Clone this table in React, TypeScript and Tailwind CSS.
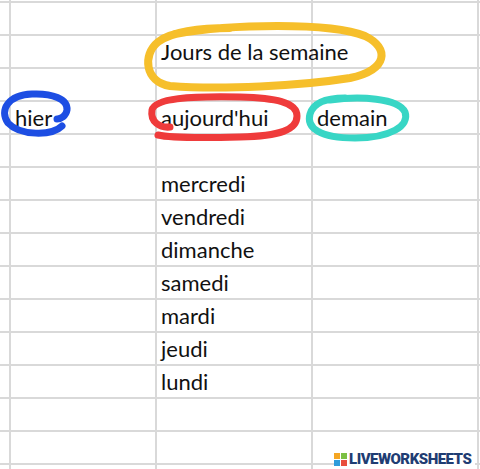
import React from "react";

const rows: [string, string, string, string][] = [
  ["", "", "", ""],
  ["", "", "Jours de la semaine", ""],
  ["", "", "", ""],
  ["", "hier", "aujourd'hui", "demain"],
  ["", "", "", ""],
  ["", "", "mercredi", ""],
  ["", "", "vendredi", ""],
  ["", "", "dimanche", ""],
  ["", "", "samedi", ""],
  ["", "", "mardi", ""],
  ["", "", "jeudi", ""],
  ["", "", "lundi", ""],
  ["", "", "", ""],
  ["", "", "", ""],
];

const Cell = ({ w, text }: { w: string; text: string }) => (
  <div className={`${w} h-full shrink-0 border-r-2 border-[#d9d9d9] flex items-end pl-[4px] pb-[2px] overflow-visible`}>
    {text ? (
      <span className="whitespace-nowrap text-[22px] leading-[26px] text-[#111111]">{text}</span>
    ) : null}
  </div>
);

export default function App() {
  return (
    <div
      className="relative w-[480px] h-[469px] bg-white overflow-hidden"
      style={{ fontFamily: "Lato, 'Open Sans', sans-serif" }}
    >
      <div className="flex flex-col">
        <div className="h-[3px] border-b-2 border-[#d9d9d9] flex">
          <div className="w-[11px] h-full border-r-2 border-[#d9d9d9]" />
          <div className="w-[146px] h-full border-r-2 border-[#d9d9d9]" />
          <div className="w-[156px] h-full border-r-2 border-[#d9d9d9]" />
          <div className="w-[166px] h-full border-r-2 border-[#d9d9d9]" />
        </div>
        {rows.map((r, i) => (
          <div key={i} className="h-[33px] border-b-2 border-[#d9d9d9] flex">
            <Cell w="w-[11px]" text={r[0]} />
            <Cell w="w-[146px]" text={r[1]} />
            <Cell w="w-[156px]" text={r[2]} />
            <Cell w="w-[166px]" text={r[3]} />
          </div>
        ))}
        <div className="h-[10px] flex">
          <div className="w-[11px] h-full border-r-2 border-[#d9d9d9]" />
          <div className="w-[146px] h-full border-r-2 border-[#d9d9d9]" />
          <div className="w-[156px] h-full border-r-2 border-[#d9d9d9]" />
          <div className="w-[166px] h-full border-r-2 border-[#d9d9d9]" />
        </div>
      </div>

      <svg className="absolute inset-0 pointer-events-none" width="480" height="469" viewBox="0 0 480 469" fill="none">
        <path
          d="M 175 34 C 230 24, 330 22, 365 36 C 390 48, 388 70, 350 78 C 300 86, 220 90, 170 86 C 145 82, 142 55, 158 42 C 170 32, 200 28, 230 28"
          stroke="#f6bf2b"
          strokeWidth="8"
          strokeLinecap="round"
          strokeLinejoin="round"
        />
        <path
          d="M 62 126 C 52 136, 20 136, 8 123 C -1 110, 8 95, 32 94 C 52 93, 68 99, 67 110 C 66 116, 61 119, 57 119"
          stroke="#1d4ee3"
          strokeWidth="7"
          strokeLinecap="round"
          strokeLinejoin="round"
        />
        <path
          d="M 170 127 C 160 128, 150 122, 152 110 C 155 98, 190 96, 240 97 C 275 98, 297 102, 297 116 C 297 130, 280 136, 240 137 C 200 138, 170 138, 158 135"
          stroke="#ef3b3b"
          strokeWidth="7"
          strokeLinecap="round"
          strokeLinejoin="round"
        />
        <path
          d="M 330 100 C 360 96, 398 98, 405 112 C 410 126, 390 138, 355 138 C 320 138, 306 128, 310 114 C 313 104, 325 98, 345 98"
          stroke="#38d6c5"
          strokeWidth="7"
          strokeLinecap="round"
          strokeLinejoin="round"
        />
      </svg>

      <div className="absolute left-[334px] top-[451px] h-[16px] pr-[4px] bg-white flex items-center gap-[2px]">
        <div className="grid grid-cols-2 gap-[1px]">
          <div className="w-[6px] h-[6px] bg-[#f5a623]" />
          <div className="w-[6px] h-[6px] bg-[#7bc043]" />
          <div className="w-[6px] h-[6px] bg-[#2d9cdb]" />
          <div className="w-[6px] h-[6px] bg-[#e94e3c]" />
        </div>
        <span
          className="text-[15px] font-black leading-none text-[#1f3d73] tracking-[-0.5px]"
          style={{ fontFamily: "Roboto, 'Liberation Sans', sans-serif" }}
        >
          LIVEWORKSHEETS
        </span>
      </div>
    </div>
  );
}
